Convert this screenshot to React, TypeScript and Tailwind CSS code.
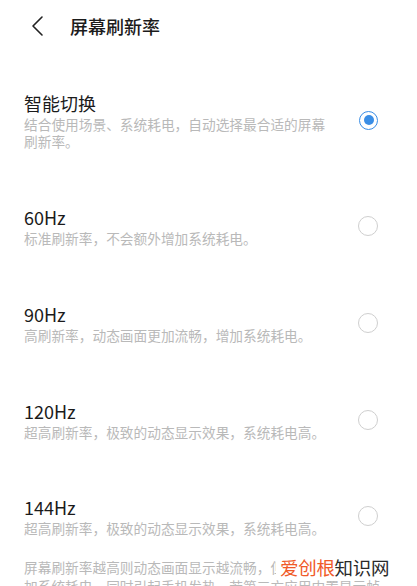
import React, { useState } from 'react';

interface RateOption {
  id: string;
  title: string;
  desc: string;
}

const options: RateOption[] = [
  { id: 'auto', title: '智能切换', desc: '结合使用场景、系统耗电，自动选择最合适的屏幕刷新率。' },
  { id: '60', title: '60Hz', desc: '标准刷新率，不会额外增加系统耗电。' },
  { id: '90', title: '90Hz', desc: '高刷新率，动态画面更加流畅，增加系统耗电。' },
  { id: '120', title: '120Hz', desc: '超高刷新率，极致的动态显示效果，系统耗电高。' },
  { id: '144', title: '144Hz', desc: '超高刷新率，极致的动态显示效果，系统耗电高。' },
];

function Radio({ checked }: { checked: boolean }) {
  return checked ? (
    <div className="w-[19px] h-[19px] rounded-full border-[1.5px] border-[#3a8ee6] flex items-center justify-center">
      <div className="w-[10px] h-[10px] rounded-full bg-[#3a8ee6]" />
    </div>
  ) : (
    <div className="w-[20px] h-[20px] rounded-full border-[1.5px] border-[#cfcfcf]" />
  );
}

export default function App() {
  const [selected, setSelected] = useState('auto');

  return (
    <div
      className="relative w-[417px] h-[586px] overflow-hidden bg-white text-[#1b1b1b]"
      style={{ fontFamily: '"Noto Sans CJK SC", "Noto Sans", sans-serif' }}
    >
      <div className="flex items-center h-[52px]">
        <svg width="40" height="24" viewBox="0 0 40 24" className="ml-[22px]">
          <path d="M20 3 L11 12 L20 21" fill="none" stroke="#222" strokeWidth="1.6" strokeLinecap="round" strokeLinejoin="round" />
        </svg>
        <h1 className="ml-[8px] text-[18px] font-medium leading-none">屏幕刷新率</h1>
      </div>

      <div className="pt-[11px]">
        {options.map((opt, i) => (
          <div
            key={opt.id}
            onClick={() => setSelected(opt.id)}
            className={`flex items-center justify-between pl-6 pr-[39px] ${i === options.length - 1 ? 'pt-[26px] pb-0' : 'py-[27px]'}`}
          >
            <div className="w-[312px] flex-none">
              <div className="text-[18px] leading-[26px]">{opt.title}</div>
              <div className="text-[13.7px] leading-[17px] text-[#b9b9b9]">{opt.desc}</div>
            </div>
            <Radio checked={selected === opt.id} />
          </div>
        ))}
      </div>

      <p className="mt-[21px] pl-6 pr-[4px] text-[13.7px] leading-[19px] text-[#b9b9b9] whitespace-nowrap">
        屏幕刷新率越高则动态画面显示越流畅，但会增
        <br />
        加系统耗电，同时引起手机发热，若第三方应用内置显示帧
      </p>

      <div className="absolute left-[276px] top-[556px] bg-white pl-[4px] pr-[2px] text-[18.5px] leading-[22px] tracking-[-0.3px]">
        <span className="text-[#f05a28]">爱创根</span>
        <span className="text-[#2a2a2a]">知识网</span>
      </div>
    </div>
  );
}
